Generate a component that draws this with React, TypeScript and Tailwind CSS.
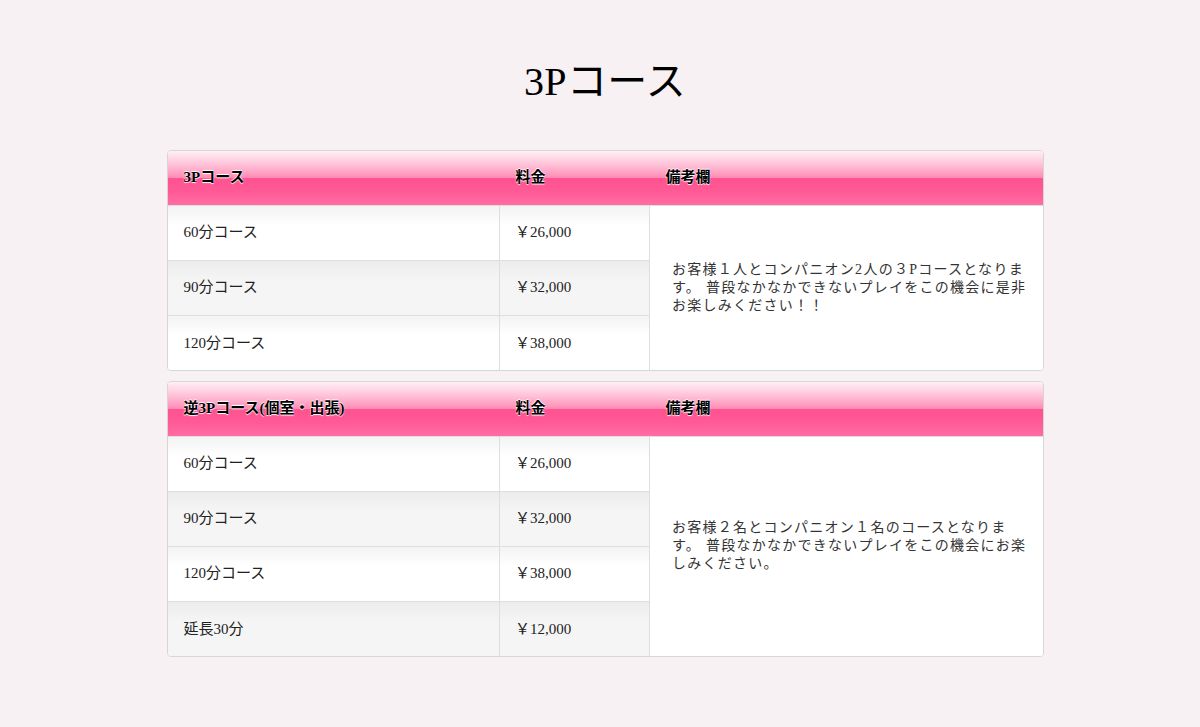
const FONT = "font-['Liberation_Serif','Noto_Sans_CJK_JP',serif]";

type Row = { name: string; price: string };

interface CourseTableProps {
  title: string;
  rows: Row[];
  note: string[];
}

function CourseTable({ title, rows, note }: CourseTableProps) {
  return (
    <div className="rounded border border-[#d6d6d6] overflow-hidden bg-white">
      <table className="w-full border-collapse table-fixed">
        <colgroup>
          <col className="w-[332px]" />
          <col className="w-[150px]" />
          <col />
        </colgroup>
        <thead>
          <tr className="h-[54px] bg-[linear-gradient(to_bottom,#fff0f5_0%,#ffc2d8_25%,#ff8db6_49%,#ff5291_51%,#ff5a96_75%,#ff6ca3_100%)]">
            <th className="text-left font-bold text-[15px] text-black pl-4 pb-[2px] [text-shadow:0_1px_1px_#fff,0_-1px_1px_#fff]">{title}</th>
            <th className="text-left font-bold text-[15px] text-black pl-4 pb-[2px] [text-shadow:0_1px_1px_#fff,0_-1px_1px_#fff]">料金</th>
            <th className="text-left font-bold text-[15px] text-black pl-4 pb-[2px] [text-shadow:0_1px_1px_#fff,0_-1px_1px_#fff]">備考欄</th>
          </tr>
        </thead>
        <tbody>
          {rows.map((r, i) => (
            <tr
              key={r.name}
              className={`h-[55px] border-t border-[#dedede] ${
                i % 2 === 0
                  ? "bg-[linear-gradient(to_bottom,#f3f3f3,#ffffff_35%)]"
                  : "bg-[linear-gradient(to_bottom,#ececec,#f5f5f5_35%)]"
              }`}
            >
              <td className="pl-4 text-[15px] text-[#222] border-r border-[#dedede]">{r.name}</td>
              <td className="pl-[15px] text-[15px] text-[#222] border-r border-[#dedede]">{r.price}</td>
              {i === 0 && (
                <td rowSpan={rows.length} className="pl-[22px] pr-2 bg-white align-middle">
                  <p className="text-[14px] leading-[18px] text-[#333] tracking-[0.09em] whitespace-nowrap">
                    {note.map((l) => (
                      <span key={l} className="block">{l}</span>
                    ))}
                  </p>
                </td>
              )}
            </tr>
          ))}
        </tbody>
      </table>
    </div>
  );
}

export default function App() {
  return (
    <div className={`min-h-[727px] bg-[#f7f1f3] pl-[10px] ${FONT}`}>
      <h1 className="text-center text-[40px] leading-none text-black pt-[62px] pb-[48px] tracking-[0.01em]">3Pコース</h1>
      <div className="w-[877px] mx-auto flex flex-col gap-[10px]">
        <CourseTable
          title="3Pコース"
          rows={[
            { name: "60分コース", price: "￥26,000" },
            { name: "90分コース", price: "￥32,000" },
            { name: "120分コース", price: "￥38,000" },
          ]}
          note={[
            "お客様１人とコンパニオン2人の３Pコースとなりま",
            "す。 普段なかなかできないプレイをこの機会に是非",
            "お楽しみください！！",
          ]}
        />
        <CourseTable
          title="逆3Pコース(個室・出張)"
          rows={[
            { name: "60分コース", price: "￥26,000" },
            { name: "90分コース", price: "￥32,000" },
            { name: "120分コース", price: "￥38,000" },
            { name: "延長30分", price: "￥12,000" },
          ]}
          note={[
            "お客様２名とコンパニオン１名のコースとなりま",
            "す。 普段なかなかできないプレイをこの機会にお楽",
            "しみください。",
          ]}
        />
      </div>
    </div>
  );
}
